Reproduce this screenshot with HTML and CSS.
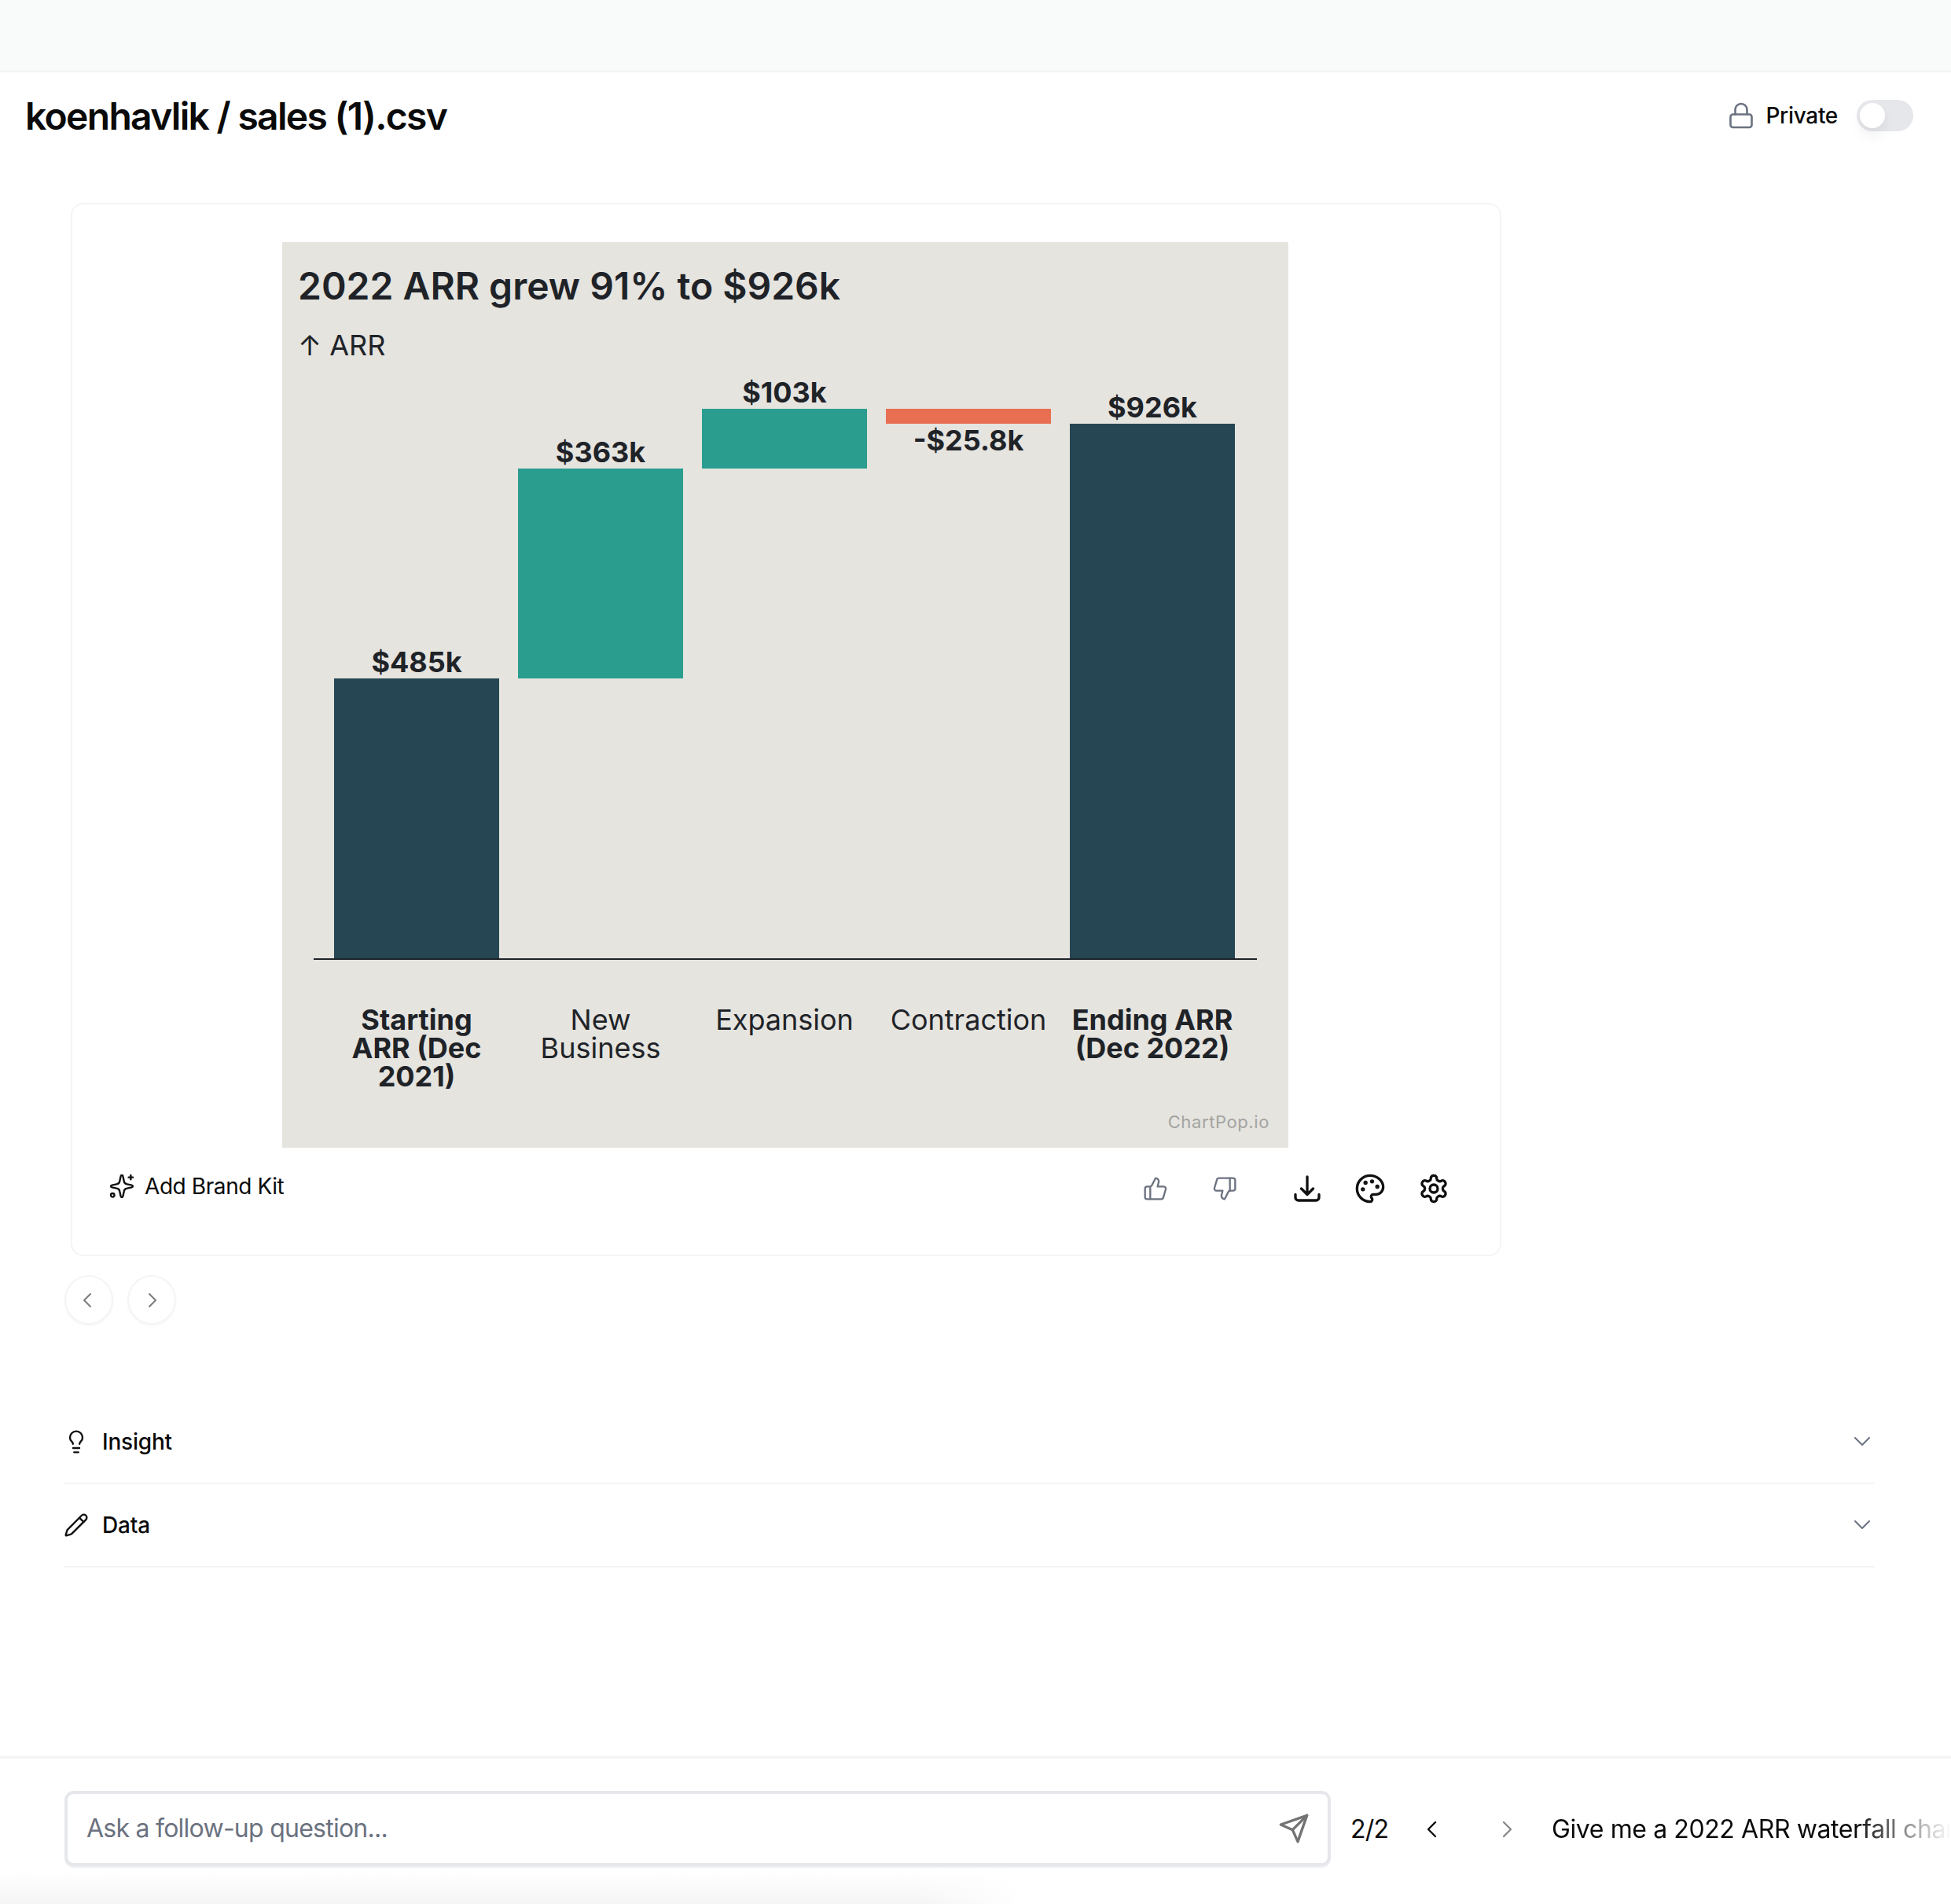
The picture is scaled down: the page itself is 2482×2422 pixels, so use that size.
FILE: index.html
```html
<!DOCTYPE html>
<html lang="en">
<head>
<meta charset="utf-8">
<title>koenhavlik / sales (1).csv</title>
<link rel="stylesheet" href="styles.css">
</head>
<body>
<div class="app">
  <div class="topbar"></div>
  <header class="header">
    <h1 class="title">koenhavlik / sales (1).csv</h1>
    <div class="privacy">
      <svg class="icon icon-lock" viewBox="0 0 24 24"><rect x="3" y="11" width="18" height="11" rx="2"/><path d="M7 11V7a5 5 0 0 1 10 0v4"/></svg>
      <span class="privacy-label">Private</span>
      <span class="toggle"><span class="knob"></span></span>
    </div>
  </header>

  <main class="main">
    <section class="card">
      <svg class="chart" viewBox="0 0 1280 1152" width="1280" height="1152">
        <rect class="chart-bg" width="1280" height="1152"/>
        <text class="c-title" x="20" y="73">2022 ARR grew 91% to $926k</text>
        <text class="c-axis" x="20" y="144">↑ ARR</text>
        <rect class="bar-dark" x="66" y="555" width="210" height="356"/>
        <rect class="bar-teal" x="300" y="288" width="210" height="267"/>
        <rect class="bar-teal" x="534" y="212" width="210" height="76"/>
        <rect class="bar-red" x="768" y="212" width="210" height="19"/>
        <rect class="bar-dark" x="1002" y="231" width="210" height="680"/>
        <rect class="axis" x="40" y="911" width="1200" height="2"/>
        <text class="c-val" x="171" y="547">$485k</text>
        <text class="c-val" x="405" y="280">$363k</text>
        <text class="c-val" x="639" y="204">$103k</text>
        <text class="c-val" x="873" y="265">-$25.8k</text>
        <text class="c-val" x="1107" y="223">$926k</text>
        <text class="c-cat bold" x="171" y="1002">Starting</text>
        <text class="c-cat bold" x="171" y="1038">ARR (Dec</text>
        <text class="c-cat bold" x="171" y="1074">2021)</text>
        <text class="c-cat" x="405" y="1002">New</text>
        <text class="c-cat" x="405" y="1038">Business</text>
        <text class="c-cat" x="639" y="1002">Expansion</text>
        <text class="c-cat" x="873" y="1002">Contraction</text>
        <text class="c-cat bold" x="1107" y="1002">Ending ARR</text>
        <text class="c-cat bold" x="1107" y="1038">(Dec 2022)</text>
        <text class="c-mark" x="1256" y="1127">ChartPop.io</text>
      </svg>
      <div class="card-actions">
        <div class="brand">
          <svg class="icon icon-spark" viewBox="0 0 24 24"><path d="M12 1.5C12.6 1.5 13 2 13.1 2.6L14 7A3.5 3.5 0 0 0 17 10L21.5 11C22.8 11.3 22.8 12.7 21.5 13L17 14A3.5 3.5 0 0 0 14 17L13.1 21.4C12.8 22.8 11.2 22.8 10.9 21.4L10 17A3.5 3.5 0 0 0 7 14L2.5 13C1.2 12.7 1.2 11.3 2.5 11L7 10A3.5 3.5 0 0 0 10 7L10.9 2.6C11 2 11.4 1.5 12 1.5Z"/><path d="M20.5 1.5v4M18.5 3.5h4"/><circle cx="3.2" cy="20.5" r="1.7"/></svg>
          <span>Add Brand Kit</span>
        </div>
        <div class="tools">
          <svg class="icon icon-thumb" viewBox="0 0 24 24"><path d="M7 10v12"/><path d="M15 5.88 14 10h5.83a2 2 0 0 1 1.92 2.56l-2.33 8A2 2 0 0 1 17.5 22H4a2 2 0 0 1-2-2v-8a2 2 0 0 1 2-2h2.76a2 2 0 0 0 1.79-1.11L12 2a3.13 3.13 0 0 1 3 3.88Z"/></svg>
          <svg class="icon icon-thumb down" viewBox="0 0 24 24"><path d="M17 14V2"/><path d="M9 18.12 10 14H4.17a2 2 0 0 1-1.92-2.56l2.33-8A2 2 0 0 1 6.5 2H20a2 2 0 0 1 2 2v8a2 2 0 0 1-2 2h-2.76a2 2 0 0 0-1.79 1.11L12 22a3.13 3.13 0 0 1-3-3.88Z"/></svg>
          <svg class="icon icon-tool tray" viewBox="0 0 24 24"><path d="M3 16.5v2.25A2.25 2.25 0 0 0 5.25 21h13.5A2.25 2.25 0 0 0 21 18.75V16.5M16.5 12 12 16.5m0 0L7.5 12m4.5 4.5V3"/></svg>
          <svg class="icon icon-tool palette" viewBox="0 0 24 24"><circle class="dot" cx="13.5" cy="6.5" r=".6"/><circle class="dot" cx="17.5" cy="10.5" r=".6"/><circle class="dot" cx="8.5" cy="7.5" r=".6"/><circle class="dot" cx="6.5" cy="12.5" r=".6"/><path d="M12 2C6.5 2 2 6.5 2 12s4.5 10 10 10c.926 0 1.648-.746 1.648-1.688 0-.437-.18-.835-.437-1.125-.29-.289-.438-.652-.438-1.125a1.64 1.64 0 0 1 1.668-1.668h1.996c3.051 0 5.555-2.503 5.555-5.554C21.965 6.012 17.461 2 12 2z"/></svg>
          <svg class="icon icon-tool" viewBox="0 0 24 24"><path d="M12.22 2h-.44a2 2 0 0 0-2 2v.18a2 2 0 0 1-1 1.73l-.43.25a2 2 0 0 1-2 0l-.15-.08a2 2 0 0 0-2.73.73l-.22.38a2 2 0 0 0 .73 2.73l.15.1a2 2 0 0 1 1 1.72v.51a2 2 0 0 1-1 1.74l-.15.09a2 2 0 0 0-.73 2.73l.22.38a2 2 0 0 0 2.73.73l.15-.08a2 2 0 0 1 2 0l.43.25a2 2 0 0 1 1 1.73V20a2 2 0 0 0 2 2h.44a2 2 0 0 0 2-2v-.18a2 2 0 0 1 1-1.73l.43-.25a2 2 0 0 1 2 0l.15.08a2 2 0 0 0 2.73-.73l.22-.39a2 2 0 0 0-.73-2.73l-.15-.08a2 2 0 0 1-1-1.74v-.5a2 2 0 0 1 1-1.74l.15-.09a2 2 0 0 0 .73-2.73l-.22-.38a2 2 0 0 0-2.73-.73l-.15.08a2 2 0 0 1-2 0l-.43-.25a2 2 0 0 1-1-1.73V4a2 2 0 0 0-2-2z"/><circle cx="12" cy="12" r="3"/></svg>
        </div>
      </div>
    </section>

    <div class="pager">
      <button class="round"><svg class="icon icon-chev" viewBox="0 0 24 24"><path d="M14 4l-8 8 8 8"/></svg></button>
      <button class="round"><svg class="icon icon-chev" viewBox="0 0 24 24"><path d="M9 4l8 8-8 8"/></svg></button>
    </div>

    <div class="accordion">
      <div class="acc-row">
        <svg class="icon icon-acc bulb" viewBox="0 0 24 24"><path d="M15.09 14c.18-.98.65-1.74 1.41-2.5A4.65 4.65 0 0 0 18 8 6 6 0 0 0 6 8c0 1 .23 2.23 1.5 3.5A4.61 4.61 0 0 1 8.91 14"/><path d="M9 18h6"/><path d="M10 22h4"/></svg>
        <span class="acc-label">Insight</span>
        <svg class="icon icon-caret" viewBox="0 0 20 12"><path d="M1 1l9 9 9-9"/></svg>
      </div>
      <div class="acc-row">
        <svg class="icon icon-acc" viewBox="0 0 24 24"><path d="M21.174 6.812a1 1 0 0 0-3.986-3.987L3.842 16.174a2 2 0 0 0-.5.83l-1.321 4.352a.5.5 0 0 0 .623.622l4.353-1.32a2 2 0 0 0 .83-.497z"/><path d="m15 5 4 4"/></svg>
        <span class="acc-label">Data</span>
        <svg class="icon icon-caret" viewBox="0 0 20 12"><path d="M1 1l9 9 9-9"/></svg>
      </div>
    </div>
  </main>

  <footer class="composer">
    <div class="ask">
      <span class="placeholder">Ask a follow-up question...</span>
      <svg class="icon icon-send" viewBox="0 0 24 24"><path d="M22 2 15 22l-4-9-9-4z"/><path d="M22 2 11 13"/></svg>
    </div>
    <span class="count">2/2</span>
    <svg class="icon icon-nav" viewBox="0 0 16 24"><path d="M13 3l-9 9 9 9"/></svg>
    <svg class="icon icon-nav off" viewBox="0 0 16 24"><path d="M3 3l9 9-9 9"/></svg>
    <span class="question">Give me a 2022 ARR waterfall chart</span>
  </footer>
</div>
</body>
</html>
```

FILE: styles.css
```css
* { box-sizing: border-box; }
html, body { margin: 0; padding: 0; background: #fff; }
body { font-family: Inter, "Liberation Sans", sans-serif; color: #0a0a0a; }
.app { position: relative; width: 2482px; height: 2422px; display: flex; flex-direction: column; overflow: hidden; }
.icon { display: block; fill: none; stroke: currentColor; stroke-linecap: round; stroke-linejoin: round; flex: none; }

.topbar { height: 92px; flex: none; background: #f9fafa; border-bottom: 2px solid #f3f4f6; }

.header { height: 106px; flex: none; display: flex; align-items: center; justify-content: space-between; padding: 4px 48px 0 32px; }
.title { margin: 2px 0 0; font-size: 48px; line-height: 64px; font-weight: 600; letter-spacing: -1.7px; color: #0a0a0a; }
.privacy { display: flex; align-items: center; }
.icon-lock { width: 36px; height: 36px; stroke-width: 1.75; color: #6b7280; margin-right: 13px; }
.privacy-label { font-size: 28px; line-height: 40px; font-weight: 500; letter-spacing: -.3px; margin-right: 24px; }
.toggle { width: 72px; height: 40px; border-radius: 20px; background: #e5e7eb; padding: 4px; display: block; }
.knob { display: block; width: 32px; height: 32px; border-radius: 50%; background: #fff; box-shadow: 0 10px 16px rgba(0,0,0,.06); }

.main { flex: 1; padding: 60px 97px 0 82px; display: flex; flex-direction: column; }

.card { width: 1820px; height: 1340px; margin-left: 8px; border: 2px solid #f3f4f6; border-radius: 16px; padding: 48px 2px 0 0; display: flex; flex-direction: column; align-items: center; }
.chart { display: block; flex: none; }
.chart-bg { fill: #e5e4df; }
.bar-dark { fill: #264653; }
.bar-teal { fill: #2a9d8f; }
.bar-red { fill: #e96f53; }
.axis { fill: #1f2328; }
.c-title { font-size: 48px; font-weight: 600; fill: #1f2328; }
.c-axis { font-size: 36px; font-weight: 400; fill: #1f2328; }
.c-val { font-size: 36px; font-weight: 700; fill: #1f2328; text-anchor: middle; }
.c-cat { font-size: 36px; font-weight: 400; fill: #1f2328; text-anchor: middle; }
.c-cat.bold { font-weight: 700; }
.c-mark { font-size: 22px; letter-spacing: .6px; fill: #a3a3a0; text-anchor: end; }

.card-actions { width: 100%; display: flex; justify-content: space-between; padding: 33px 62px 0 47px; }
.brand { display: flex; align-items: center; gap: 13px; font-size: 28px; line-height: 32px; height: 32px; font-weight: 400; letter-spacing: -.42px; }
.icon-spark { width: 32px; height: 32px; stroke-width: 1.8; color: #111; }
.tools { display: flex; align-items: center; height: 38px; }
.icon-thumb { width: 32px; height: 32px; stroke-width: 1.75; color: #6b7280; margin-right: 56px; }
.icon-thumb.down { margin-right: 69px; }
.icon-tool { width: 40px; height: 40px; stroke-width: 2; color: #111; margin-right: 40px; }
.icon-tool.palette { margin-right: 41px; }
.icon-tool:last-child { margin-right: 0; }
.dot { fill: currentColor; }

.pager { display: flex; gap: 18px; margin-top: 24px; }
.round { width: 62px; height: 63px; padding: 0; border: 2px solid #f3f4f6; border-radius: 50%; background: #fff; box-shadow: 0 2px 3px rgba(0,0,0,.03); display: flex; align-items: center; justify-content: center; }
.icon-chev { width: 24px; height: 24px; stroke-width: 2; color: #7b7b7b; }

.accordion { width: 2303px; margin-top: 97px; }
.acc-row { height: 106px; display: flex; align-items: center; border-bottom: 2px solid #f3f4f6; }
.icon-acc { width: 32px; height: 32px; stroke-width: 1.8; color: #111; margin: 0 17px 0 -1px; }
.acc-label { font-size: 28px; line-height: 40px; font-weight: 500; letter-spacing: -.2px; flex: 1; }
.icon-caret { width: 20px; height: 12px; stroke-width: 2; color: #6b7280; margin-right: 6px; }

.composer { height: 188px; flex: none; display: flex; align-items: center; padding: 0 0 5px 82px; border-top: 3px solid #f3f4f6; position: relative; }
.composer::after { content: ""; position: absolute; left: 0; bottom: 0; width: 1300px; height: 42px; background: linear-gradient(to bottom, rgba(245,245,245,0), #f5f5f5); pointer-events: none; -webkit-mask-image: linear-gradient(to right, #000 90%, transparent); mask-image: linear-gradient(to right, #000 90%, transparent); }
.ask { width: 1611px; height: 96px; flex: none; border: 4px solid #e5e7eb; border-radius: 12px; box-shadow: 0 2px 0 #f0f1f3; display: flex; align-items: center; justify-content: space-between; padding: 0 23px 0 24px; position: relative; top: -1px; background: #fff; z-index: 1; }
.placeholder { font-size: 32px; line-height: 44px; letter-spacing: -.75px; color: #6b7280; }
.icon-send { width: 40px; height: 40px; stroke-width: 2; color: #737373; }
.count { font-size: 32px; line-height: 44px; letter-spacing: -.8px; margin-left: 25px; width: 71px; }
.icon-nav { width: 16px; height: 24px; stroke-width: 2.4; color: #0a0a0a; margin-left: 24px; }
.icon-nav.off { color: #8a8a8a; margin-left: 81px; }
.question { font-size: 32px; line-height: 44px; letter-spacing: -.4px; margin-left: 48px; flex: 1; white-space: nowrap; overflow: hidden; -webkit-mask-image: linear-gradient(to right, #000 76%, transparent 100%); mask-image: linear-gradient(to right, #000 76%, transparent 100%); }
```
